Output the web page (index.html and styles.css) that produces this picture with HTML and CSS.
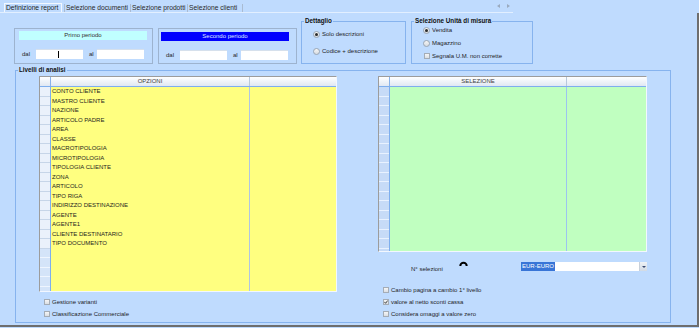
FILE: index.html
```html
<!DOCTYPE html>
<html lang="it">
	<head>
		<meta charset="UTF-8" />
		<meta name="viewport" content="width=device-width, initial-scale=1.0" />
		<title>Definizione report</title>
		<link rel="stylesheet" href="styles.css">
	</head>
	<body>
		<div class="tabbar">
			<div class="tab-active">Definizione report</div>
			<div class="tab tab-docs">Selezione documenti</div>
			<div class="tab tab-prod">Selezione prodotti</div>
			<div class="tab tab-cli">Selezione clienti</div>
			<div class="tab-arrows">
				<span class="arrow-left"></span>
				<span class="arrow-right"></span>
			</div>
		</div>

		<div class="panel">
			<div class="top-row">
				<!-- Periods -->
				<div class="period period-first">
					<div class="period-title title-primo">Primo periodo</div>
					<div class="period-fields">
						<span class="lbl-dal">dal</span>
						<span class="input"><span class="caret"></span></span>
						<span class="lbl-al">al</span>
						<span class="input"></span>
					</div>
				</div>
				<div class="period period-second">
					<div class="period-title title-secondo">Secondo periodo</div>
					<div class="period-fields">
						<span class="lbl-dal">dal</span>
						<span class="input"></span>
						<span class="lbl-al">al</span>
						<span class="input"></span>
					</div>
				</div>

				<fieldset class="group dettaglio">
					<legend>Dettaglio</legend>
					<div class="opts">
						<div class="opt"><span class="radio on"></span>Solo descrizioni</div>
						<div class="opt"><span class="radio"></span>Codice + descrizione</div>
					</div>
				</fieldset>

				<fieldset class="group unita">
					<legend>Selezione Unità di misura</legend>
					<div class="opts">
						<div class="opt"><span class="radio on"></span>Vendita</div>
						<div class="opt"><span class="radio"></span>Magazzino</div>
						<div class="opt"><span class="check"></span>Segnala U.M. non corrette</div>
					</div>
				</fieldset>
			</div>

			<fieldset class="group livelli">
				<legend>Livelli di analisi</legend>
				<div class="livelli-body">
					<div class="col-left">
						<div class="grid grid-opz">
							<div class="grid-head">
								<div class="gh-corner"></div>
								<div class="gh-col opz-col1">OPZIONI</div>
								<div class="gh-col gh-last"></div>
							</div>
							<div class="grid-body">
								<div class="rowheads rowheads-opz">
									<div class="rh"></div><div class="rh"></div><div class="rh"></div>
									<div class="rh"></div><div class="rh"></div><div class="rh"></div>
									<div class="rh"></div><div class="rh"></div><div class="rh"></div>
									<div class="rh"></div><div class="rh"></div><div class="rh"></div>
									<div class="rh"></div><div class="rh"></div><div class="rh"></div>
									<div class="rh"></div><div class="rh"></div>
									<div class="rh rh-empty"></div><div class="rh rh-empty"></div>
									<div class="rh rh-empty"></div><div class="rh rh-empty"></div>
									<div class="rh rh-empty"></div>
								</div>
								<div class="gcol opz-col1 yellow">
									<div class="cell">CONTO CLIENTE</div>
									<div class="cell">MASTRO CLIENTE</div>
									<div class="cell">NAZIONE</div>
									<div class="cell">ARTICOLO PADRE</div>
									<div class="cell">AREA</div>
									<div class="cell">CLASSE</div>
									<div class="cell">MACROTIPOLOGIA</div>
									<div class="cell">MICROTIPOLOGIA</div>
									<div class="cell">TIPOLOGIA CLIENTE</div>
									<div class="cell">ZONA</div>
									<div class="cell">ARTICOLO</div>
									<div class="cell">TIPO RIGA</div>
									<div class="cell">INDIRIZZO DESTINAZIONE</div>
									<div class="cell">AGENTE</div>
									<div class="cell">AGENTE1</div>
									<div class="cell">CLIENTE DESTINATARIO</div>
									<div class="cell">TIPO DOCUMENTO</div>
								</div>
								<div class="gcol gcol-last yellow"></div>
							</div>
						</div>

						<div class="checks-left">
							<div class="opt opt-row"><span class="check"></span>Gestione varianti</div>
							<div class="opt opt-row"><span class="check"></span>Classificazione Commerciale</div>
						</div>
					</div>

					<div class="col-right">
						<div class="grid grid-sel">
							<div class="grid-head">
								<div class="gh-corner"></div>
								<div class="gh-col sel-col1">SELEZIONE</div>
								<div class="gh-col gh-last"></div>
							</div>
							<div class="grid-body">
								<div class="rowheads rowheads-sel">
									<div class="rh"></div><div class="rh"></div><div class="rh"></div>
									<div class="rh"></div><div class="rh"></div><div class="rh"></div>
									<div class="rh"></div><div class="rh"></div><div class="rh"></div>
									<div class="rh"></div><div class="rh"></div><div class="rh"></div>
									<div class="rh"></div><div class="rh"></div><div class="rh"></div>
									<div class="rh"></div><div class="rh"></div><div class="rh"></div>
								</div>
								<div class="gcol sel-col1 green"></div>
								<div class="gcol gcol-last green"></div>
							</div>
						</div>

						<div class="sel-row">
							<span class="sel-label">N° selezioni</span>
							<svg class="spin" width="9" height="6" viewBox="0 0 9 6">
								<path d="M1.3 6 A3.2 3.2 0 0 1 7.7 6" fill="none" stroke="#000" stroke-width="2" />
							</svg>
							<div class="combo">
								<span class="combo-text">EUR-EURO</span>
								<span class="combo-btn"><span class="combo-arrow"></span></span>
							</div>
						</div>

						<div class="checks-right">
							<div class="opt opt-row-r"><span class="check"></span>Cambio pagina a cambio 1° livello</div>
							<div class="opt opt-row-r">
								<span class="check">
									<svg width="4" height="4" viewBox="0 0 4 4">
										<path d="M0.4 1.9 L1.6 3.3 L3.7 0.5" fill="none" stroke="#333" stroke-width="0.9" />
									</svg>
								</span>valore al netto sconti cassa
							</div>
							<div class="opt opt-row-r"><span class="check"></span>Considera omaggi a valore zero</div>
						</div>
					</div>
				</div>
			</fieldset>
		</div>
	</body>
</html>
```

FILE: styles.css
```css
* {
	box-sizing: border-box;
}

body {
	margin: 0;
	width: 699px;
	height: 328px;
	overflow: hidden;
	background-color: #bfdbfe;
	font-family: "Liberation Sans", Arial, sans-serif;
	font-size: 6px;
	color: #1e1e1e;
}

/* Tabs */
.tabbar {
	display: flex;
	align-items: flex-end;
	width: 513px;
	height: 13px;
	padding-left: 4px;
	border-bottom: 1px solid #e2efff;
	font-size: 6.7px;
	white-space: nowrap;
}

.tab-active {
	width: 58px;
	height: 9px;
	line-height: 8px;
	padding-left: 1px;
	margin-right: 2px;
	border: 1px solid #f2f8ff;
	border-bottom: none;
}

.tab {
	height: 8px;
	line-height: 8px;
	padding-left: 1px;
	border-left: 1px solid #a9bbd2;
	color: #2a2a2a;
}

.tab-docs {
	width: 66px;
}

.tab-prod {
	width: 57px;
}

.tab-cli {
	width: 56px;
	border-right: 1px solid #a9bbd2;
}

.tab-arrows {
	display: flex;
	gap: 7px;
	align-self: center;
	margin-left: auto;
	margin-right: 3px;
}

.arrow-left,
.arrow-right {
	width: 0;
	height: 0;
	border-top: 2.5px solid transparent;
	border-bottom: 2.5px solid transparent;
}

.arrow-left {
	border-right: 3px solid #9aabbf;
}

.arrow-right {
	border-left: 3px solid #9aabbf;
}

/* Page panel */
.panel {
	width: 699px;
	height: 314px;
	border-right: 2px solid #6e6e6e;
	border-bottom: 2px solid #6e6e6e;
}

.top-row {
	display: flex;
	align-items: flex-start;
	height: 53px;
	padding: 4px 0 0 14px;
}

.period {
	width: 139px;
	height: 36px;
	margin-top: 11px;
	margin-right: 5px;
	padding: 2px 0 0 4px;
	border: 1px solid #9db3cf;
}

.period-second {
	margin-right: 4px;
	padding: 3px 0 0 2px;
}

.period-title {
	width: 128px;
	height: 9px;
	line-height: 9px;
	text-align: center;
}

.title-primo {
	background-color: #c0ffff;
	color: #303030;
}

.title-secondo {
	background-color: #0000ff;
	color: #dfe6ff;
}

.period-fields {
	display: flex;
	align-items: center;
	margin-top: 9px;
	padding-left: 3px;
}

.period-second .period-fields {
	padding-left: 5px;
}

.lbl-dal {
	width: 14px;
}

.lbl-al {
	width: 8px;
	margin-left: 6px;
}

.input {
	display: flex;
	width: 47px;
	height: 10px;
	background-color: #fff;
	border-top: 1px solid #d6e0ec;
}

.caret {
	width: 1px;
	height: 7px;
	margin: 0.5px 0 0 22px;
	background-color: #000;
}

/* Group boxes */
.group {
	margin: 0;
	padding: 0;
	min-width: 0;
	border: 1px solid #86b3ee;
}

.group legend {
	margin-left: 2px;
	padding: 0 1px;
	font-size: 6.3px;
	font-weight: bold;
	line-height: 8px;
	color: #111;
}

.dettaglio {
	width: 105px;
	height: 47px;
	margin-right: 5px;
}

.unita {
	width: 122px;
	height: 47px;
}

.opts {
	display: flex;
	flex-direction: column;
	padding-left: 11px;
}

.dettaglio .opts {
	padding-top: 4px;
	gap: 7px;
}

.unita .opts {
	gap: 3px;
}

.opt {
	display: flex;
	align-items: center;
	height: 10px;
	white-space: nowrap;
}

.radio {
	display: flex;
	align-items: center;
	justify-content: center;
	flex: none;
	width: 7px;
	height: 7px;
	margin-right: 2px;
	border: 1px solid #9aa6b4;
	border-radius: 50%;
	background: linear-gradient(#f6f6f6, #d6dbe1);
}

.radio.on::after {
	content: "";
	width: 3px;
	height: 3px;
	border-radius: 50%;
	background-color: #2a2a2a;
}

.check {
	display: flex;
	align-items: center;
	justify-content: center;
	flex: none;
	width: 6px;
	height: 6px;
	margin: 0 2px 0 1px;
	border: 1px solid #a4acb6;
	background: linear-gradient(#f6f6f6, #dadee3);
}

/* Livelli di analisi */
.livelli {
	width: 656px;
	height: 257px;
	margin-left: 15px;
}

.livelli-body {
	display: flex;
	padding: 2px 0 0 23px;
}

.col-left {
	width: 298px;
	margin-right: 41px;
}

.col-right {
	width: 269px;
}

.grid {
	display: flex;
	flex-direction: column;
	border: 1px solid;
	border-color: #9c9c9c #f2f7ff #f2f7ff #9c9c9c;
}

.grid-opz {
	height: 216px;
}

.grid-sel {
	height: 176px;
}

.grid-head {
	display: flex;
	flex: none;
	height: 10px;
	border-bottom: 1px solid #7eaeee;
	background: linear-gradient(#ffffff, #e0e8f3);
	color: #404040;
}

.gh-corner {
	width: 11px;
	border-right: 1px solid #88b2ea;
}

.gh-col {
	line-height: 9px;
	text-align: center;
	border-right: 1px solid #b8c8dc;
}

.gh-last {
	flex: 1;
	border-right: none;
}

.opz-col1 {
	width: 199px;
}

.sel-col1 {
	width: 177px;
}

.grid-body {
	display: flex;
	flex: 1;
	overflow: hidden;
}

.rowheads {
	flex: none;
	width: 11px;
	border-right: 1px solid #7eaeee;
}

.rh {
	height: 9.5px;
}

.rowheads-opz .rh {
	background-color: #eaf1fb;
	border-bottom: 1px solid #c6d5e8;
}

.rowheads-opz .rh-empty {
	background-color: #d4e4f9;
	border-bottom: 1px solid #eef5ff;
}

.rowheads-sel .rh {
	background-color: #c6dbf7;
	border-bottom: 1px solid #e8f2ff;
}

.gcol {
	flex: none;
	border-right: 1px solid #b0c6e2;
}

.gcol-last {
	flex: 1;
	border-right: none;
}

.yellow {
	background-color: #ffff80;
}

.green {
	background-color: #c0ffc0;
}

.sel-col1.green {
	border-right-color: #9cc4f0;
}

.cell {
	height: 9.5px;
	line-height: 9.5px;
	padding-left: 1px;
	white-space: nowrap;
}

.checks-left {
	margin-top: 4px;
	padding-left: 4px;
}

.opt-row {
	height: 12px;
}

/* Right column extras */
.sel-row {
	display: flex;
	align-items: flex-start;
	height: 16px;
	margin-top: 6px;
}

.sel-label {
	width: 49px;
	margin: 7px 0 0 33px;
	line-height: 8px;
	white-space: nowrap;
}

.spin {
	flex: none;
	margin-top: 2px;
}

.combo {
	display: flex;
	flex: none;
	width: 126px;
	height: 9px;
	margin: 4px 0 0 53px;
	background-color: #fff;
}

.combo-text {
	padding: 0 1px;
	line-height: 9px;
	background-color: #3875d7;
	color: #fff;
}

.combo-btn {
	display: flex;
	align-items: center;
	justify-content: center;
	width: 8px;
	margin-left: auto;
	border-left: 1px solid #c8d0da;
	background: linear-gradient(#eef2f6, #d2dae4);
}

.combo-arrow {
	width: 0;
	height: 0;
	border-top: 2px solid #3a4a70;
	border-left: 2px solid transparent;
	border-right: 2px solid transparent;
}

.checks-right {
	margin-top: 10.5px;
	padding-left: 4px;
}

.opt-row-r {
	height: 11.7px;
}
```
